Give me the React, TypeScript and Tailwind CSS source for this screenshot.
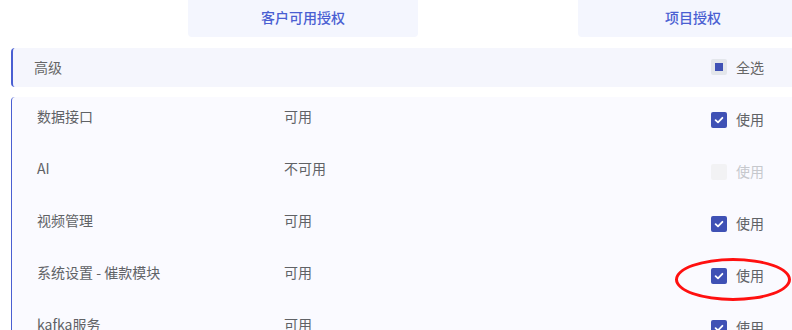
import React from 'react';

type Row = { name: string; status: string; checked: boolean; disabled?: boolean };

const rows: Row[] = [
  { name: '数据接口', status: '可用', checked: true },
  { name: 'AI', status: '不可用', checked: false, disabled: true },
  { name: '视频管理', status: '可用', checked: true },
  { name: '系统设置 - 催款模块', status: '可用', checked: true },
  { name: 'kafka服务', status: '可用', checked: true },
];

const CheckBox: React.FC<{ checked: boolean; disabled?: boolean }> = ({ checked, disabled }) => {
  if (disabled) {
    return <div className="w-4 h-4 rounded-[2px] bg-[#f2f2f4]" />;
  }
  return (
    <div className={`w-4 h-4 rounded-[2px] flex items-center justify-center ${checked ? 'bg-[#3f51b5]' : 'bg-white border border-[#c0c4cc]'}`}>
      {checked && (
        <svg width="12" height="12" viewBox="0 0 12 12" fill="none">
          <path d="M2.6 6.2 L5 8.4 L9.4 3.8" stroke="white" strokeWidth="1.8" strokeLinecap="round" strokeLinejoin="round" />
        </svg>
      )}
    </div>
  );
};

const App: React.FC = () => {
  return (
    <div
      className="relative w-[792px] h-[330px] overflow-hidden bg-white text-[14px]"
      style={{ fontFamily: '"Noto Sans CJK SC", "Noto Sans", sans-serif' }}
    >
      {/* column headers */}
      <div className="flex h-[37px] w-[900px]">
        <div className="ml-[188px] w-[230px] pb-[3px] rounded-b-[4px] bg-[#f4f6fe] flex items-center justify-center text-[#4a5fd2] font-medium leading-5">
          客户可用授权
        </div>
        <div className="ml-[160px] w-[230px] pb-[3px] rounded-b-[4px] bg-[#f4f6fe] flex items-center justify-center text-[#4a5fd2] font-medium leading-5">
          项目授权
        </div>
      </div>

      {/* section header */}
      <div className="mt-[11px] ml-[11px] w-[800px] h-[39px] pb-[2px] flex items-center bg-[#f5f6fd] border-l-2 border-[#4a5fd2] rounded-l-[4px]">
        <span className="pl-[21px] w-[698px] shrink-0 text-[#666] leading-5">高级</span>
        <div className="flex items-center">
          <div className="w-4 h-4 rounded-[2px] bg-[#e3e6eb] flex items-center justify-center">
            <div className="w-2 h-2 bg-[#3f51b5]" />
          </div>
          <span className="ml-[9px] text-[#666] leading-5">全选</span>
        </div>
      </div>

      {/* items */}
      <div className="mt-[10px] ml-[11px] w-[800px] bg-[#fafaff] border-l-[1.5px] border-[#4a5fd2] rounded-tl-[4px]">
        {rows.map((r) => (
          <div key={r.name} className="h-[52px] flex items-start">
            <span className="pl-[25px] w-[272px] shrink-0 pt-[9px] leading-5 text-[#606266]">{r.name}</span>
            <span className="pt-[9px] w-[427px] shrink-0 leading-5 text-[#606266]">{r.status}</span>
            <div className="mt-[15px]">
              <CheckBox checked={r.checked} disabled={r.disabled} />
            </div>
            <span className={`ml-[9px] mt-[12px] leading-5 ${r.disabled ? 'text-[#c6c8cd]' : 'text-[#606266]'}`}>使用</span>
          </div>
        ))}
      </div>

      {/* annotation ellipse */}
      <div className="absolute left-[675px] top-[258px] w-[116px] h-[43px] rounded-[50%] border-[3px] border-[#ff1010]" />
    </div>
  );
};

export default App;
